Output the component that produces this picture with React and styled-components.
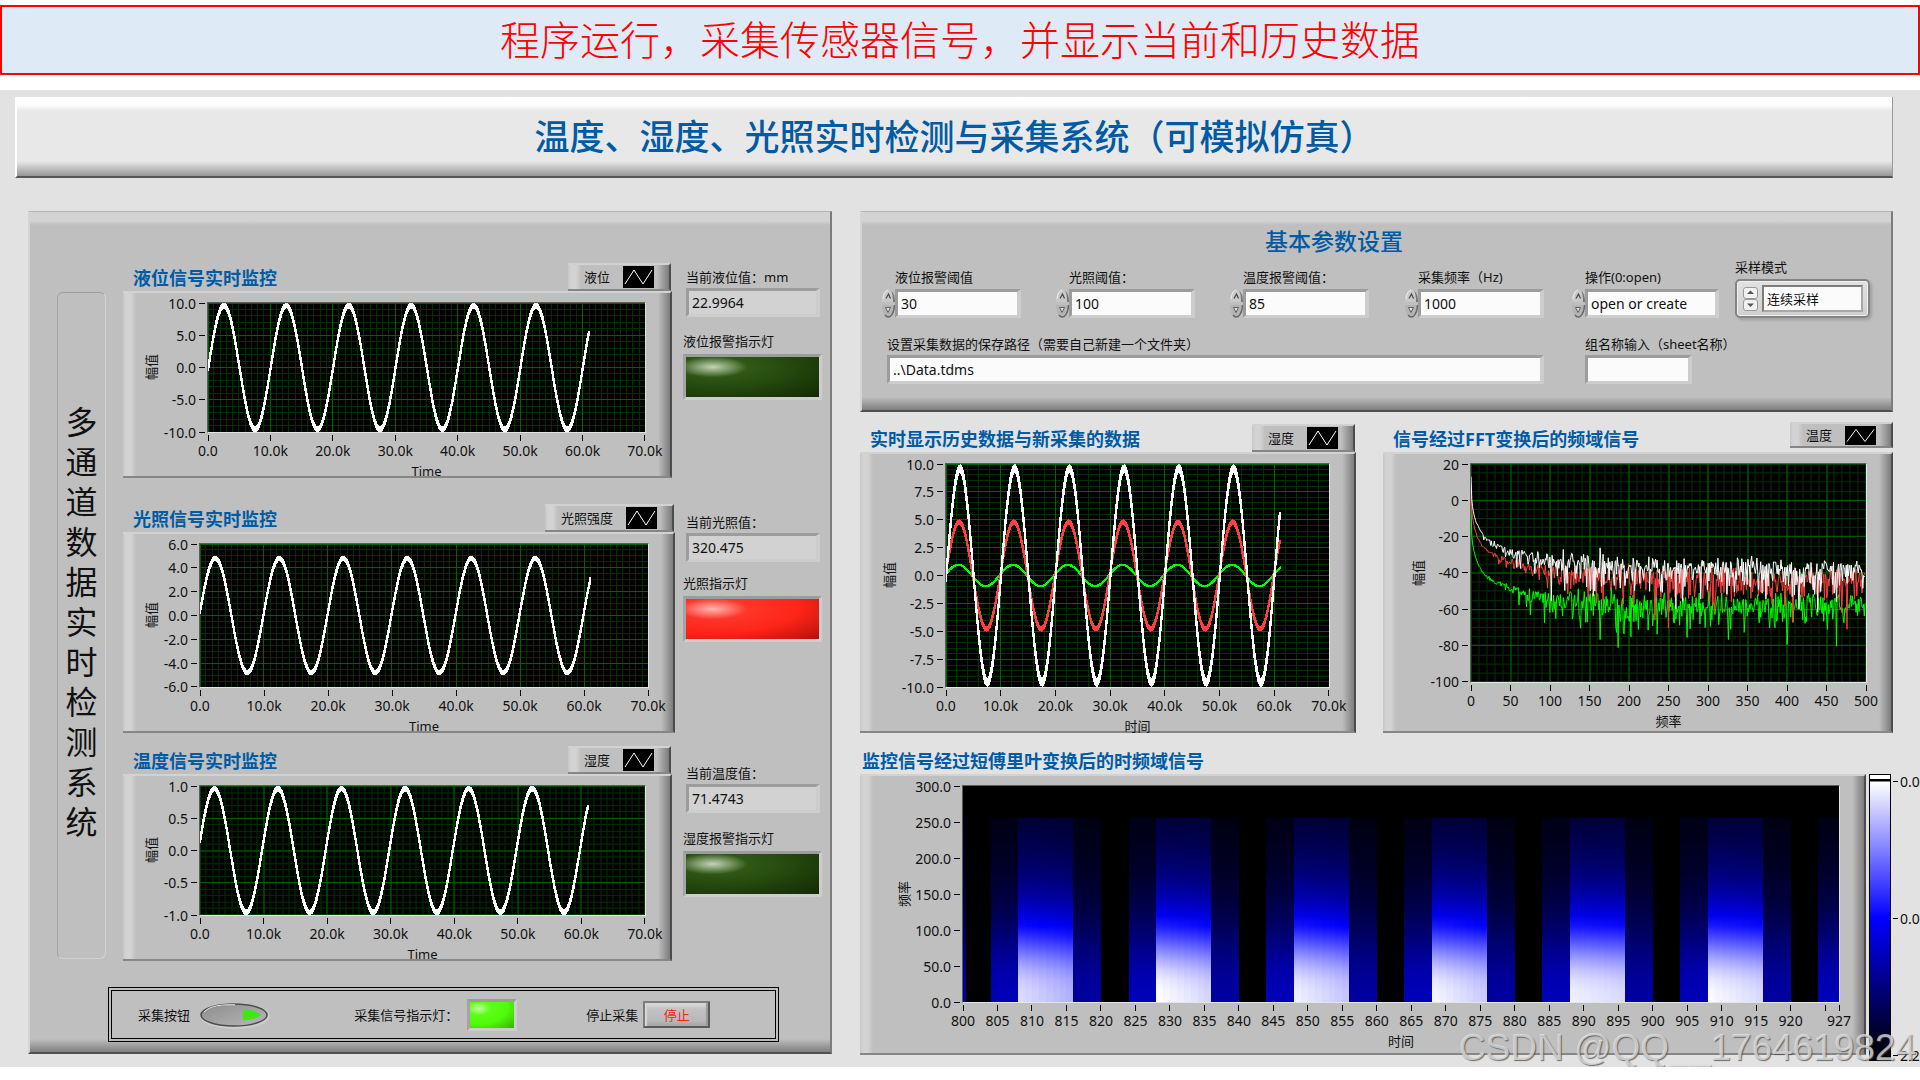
import { useId, useState } from "react";
import styled, { createGlobalStyle, css } from "styled-components";

const GlobalStyle = createGlobalStyle`
  *, *::before, *::after { box-sizing: border-box; }
  body {
    margin: 0;
    background: #fff;
    color: #111;
    font-family: "Noto Sans", "Noto Sans CJK SC", sans-serif;
    font-size: 13px;
    overflow-x: hidden;
  }
  input, select, button { font-family: inherit; margin: 0; }
`;

/* ---------- data ---------- */

const range = (from, to, step) => {
  const out = [];
  for (let i = 0; from + i * step <= to + step / 1000; i++) out.push(from + i * step);
  return out;
};

const timeLabels = ["0.0", "10.0k", "20.0k", "30.0k", "40.0k", "50.0k", "60.0k", "70.0k"];

const channels = [
  {
    title: "液位信号实时监控",
    legend: "液位",
    left: 84,
    plot: { width: 438, height: 131, max: 10, major: 5, minor: 1 },
    yLabels: ["10.0", "5.0", "0.0", "-5.0", "-10.0"],
    wave: { amp: 10, phase: -0.03 },
    narrow: true,
    gapAfter: 26,
    reading: { label: "当前液位值：mm", value: "22.9964", lamp: "液位报警指示灯", tone: "off", top: 4, gap: 14 },
  },
  {
    title: "光照信号实时监控",
    legend: "光照强度",
    left: 76,
    plot: { width: 449, height: 145, max: 6, major: 2, minor: 0.5 },
    yLabels: ["6.0", "4.0", "2.0", "0.0", "-2.0", "-4.0", "-6.0"],
    wave: { amp: 5, phase: 0.06 },
    gapAfter: 13,
    reading: { label: "当前光照值：", value: "320.475", lamp: "光照指示灯", tone: "red", top: 8, gap: 11 },
  },
  {
    title: "温度信号实时监控",
    legend: "湿度",
    left: 76,
    plot: { width: 445, height: 131, max: 1, major: 0.5, minor: 0.1 },
    yLabels: ["1.0", "0.5", "0.0", "-0.5", "-1.0"],
    wave: { amp: 1, phase: 0.15 },
    narrow: true,
    gapAfter: 0,
    reading: { label: "当前温度值：", value: "71.4743", lamp: "湿度报警指示灯", tone: "off", top: 17, gap: 15 },
  },
];

const lampTones = {
  off: ["#c3d2b8", "#37641a", "#22450c", "#0e2002"],
  red: ["#ffb4ae", "#ff4034", "#ff2418", "#980c08"],
  green: ["#c0ff9c", "#66ff20", "#50fc08", "#2c9a04"],
};

// 带噪声的正弦：峰值处较粗，过零处较细
function wavePath(amp, phase, max, w, h) {
  const toY = (v) => ((max - v) / (2 * max)) * h;
  const upper = [];
  const lower = [];
  const thick = amp * 0.03;
  for (let t = 0; t <= 61.2; t += 0.2) {
    const v = amp * 0.96 * Math.sin((2 * Math.PI * t) / 10 + phase);
    const x = ((t / 70) * w).toFixed(1);
    upper.push(`${x},${toY(v + thick).toFixed(1)}`);
    lower.unshift(`${x},${toY(v - thick).toFixed(1)}`);
  }
  return `M${upper.join("L")}L${lower.join("L")}Z`;
}

function makeRandom(seed) {
  let s = seed;
  return () => {
    s = (s * 1664525 + 1013904223) % 4294967296;
    return (s + 1) / 4294967297;
  };
}

function spectrumPoints(knots, seed, w, h) {
  const rnd = makeRandom(seed);
  const pts = [];
  for (let f = 0; f <= 499; f += 0.95) {
    let k = 1;
    while (k < knots.length - 1 && knots[k][0] < f) k++;
    const [x0, y0] = knots[k - 1];
    const [x1, y1] = knots[k];
    const t = Math.log((f + 1) / (x0 + 1)) / Math.log((x1 + 1) / (x0 + 1));
    const noise = 10 * Math.log10(-Math.log(rnd())) * 0.95 * Math.min(1, f / 140);
    const v = y0 + (y1 - y0) * t + Math.max(noise, -28);
    pts.push(`${((f / 500) * w).toFixed(1)},${(((20 - v) / 120) * h).toFixed(1)}`);
  }
  return pts.join(" ");
}

const spectra = [
  { color: "#00ff00", seed: 17, knots: [[0, -4], [1, -20], [5, -30], [10, -36], [20, -42], [50, -48], [100, -54], [200, -57], [500, -57]] },
  { color: "#ff4040", seed: 91, knots: [[0, 9], [1, -6], [5, -16], [10, -22], [20, -27], [50, -34], [100, -39], [200, -42], [500, -43]] },
  { color: "#ffffff", seed: 45, knots: [[0, 13], [1, 0], [5, -10], [10, -15], [20, -21], [50, -28], [100, -33], [200, -36], [500, -38]] },
];

const bursts = [
  [808, 0.93, 0.85],
  [828, 1, 0.92],
  [848, 0.97, 0.89],
  [868, 0.98, 0.9],
  [888, 0.97, 0.93],
  [908, 0.99, 0.93],
];

function heatColor(v) {
  if (v <= 0.5) return `rgb(0,0,${Math.round(v * 510)})`;
  const c = Math.round((v * 2 - 1) * 255);
  return `rgb(${c},${c},255)`;
}

const heatColumns = [
  { from: 800, width: 0.4, peak: 0.3 },
  ...bursts.flatMap(([start, a, b]) => [
    { from: start - 4, width: 4, peak: 0.36 },
    ...range(0, 7, 1).map((i) => ({ from: start + i, width: 1, peak: a + ((b - a) * i) / 7 })),
    { from: start + 8, width: 4, peak: 0.31 },
  ]),
  { from: 924, width: 3, peak: 0.36 },
];

/* ---------- styles ---------- */

const Banner = styled.header`
  display: flex;
  align-items: center;
  justify-content: center;
  height: 70px;
  margin: 5px 0 15px;
  border: 2px solid #fe0000;
  background: #deeaf6;
  color: #fe0000;
  font-size: 40px;
  font-weight: 300;
  line-height: 60px;
`;

const Frame = styled.main`
  position: relative;
  padding: 7px 0 6px;
  background: #e2e2e2;
`;

const TitlePanel = styled.h1`
  display: flex;
  align-items: center;
  justify-content: center;
  height: 81px;
  margin: 0 27px 33px 15px;
  border-left: 2px solid #fff;
  border-right: 1px solid #999;
  border-bottom: 2px solid #555;
  background: linear-gradient(#fff 0, #fdfdfd 8px, #e8e8e8 14px, #e8e8e8 64px, #c8c8c8 70px, #969696 100%);
  color: #005ba5;
  font-size: 35px;
  font-weight: 500;
  line-height: 40px;
`;

const Columns = styled.div`
  display: grid;
  grid-template-columns: minmax(0, 804fr) minmax(0, 1060fr);
  column-gap: 28px;
  align-items: start;
  padding-left: 28px;
`;

const raised = css`
  border-top: 1px solid #b2b2b2;
  border-left: 2px solid #d4d4d4;
  border-right: 2px solid #7c7c7c;
  border-bottom: 2px solid #505050;
  background:
    linear-gradient(#d3d3d3 0, #d2d2d2 9px, rgba(191, 191, 191, 0) 13px) top / 100% 13px no-repeat,
    linear-gradient(rgba(191, 191, 191, 0), #7e7e7e) bottom / 100% 13px no-repeat,
    #bfbfbf;
`;

const MonitorPanel = styled.section`
  ${raised}
  padding: 51px 8px 10px 27px;
`;

const MonitorBody = styled.div`
  display: grid;
  grid-template-columns: minmax(0, 66fr) minmax(0, 699fr);
`;

const SideTitle = styled.h2`
  display: flex;
  justify-content: center;
  margin: 29px 17px 2px 0;
  padding-top: 109px;
  border: 1px solid;
  border-color: #9c9c9c #d2d2d2 #d2d2d2 #a4a4a4;
  border-radius: 6px;
  font-size: 32px;
  font-weight: 400;
  line-height: 40px;

  span {
    width: 32px;
    word-break: break-all;
  }
`;

const ChannelRow = styled.div`
  display: grid;
  grid-template-columns: minmax(0, 552fr) minmax(0, 139fr);
  column-gap: 8px;
  margin-bottom: ${(p) => p.$gap}px;
`;

const Block = styled.section`
  flex: 1;
  min-width: 0;
  margin-right: ${(p) => (p.$narrow ? 3 : 0)}px;
`;

const BlockHeader = styled.div`
  display: flex;
  align-items: flex-end;
  justify-content: space-between;
  padding-left: ${(p) => p.$indent}px;
`;

const BlockTitle = styled.h3`
  margin: 0;
  color: #005ba5;
  font-size: 18px;
  font-weight: 700;
  line-height: 26px;
  white-space: nowrap;
`;

const bevel = css`
  border-top: 2px solid #d2d2d2;
  border-bottom: 2px solid #868686;
  border-right: 2px solid #4c4c4c;
  background:
    linear-gradient(90deg, #c6c6c6 0, #d3d3d3 3px, #d3d3d3 8px, rgba(191, 191, 191, 0) 13px) left / 13px 100% no-repeat,
    linear-gradient(90deg, rgba(191, 191, 191, 0), #7c7c7c) right / 12px 100% no-repeat,
    #bfbfbf;
`;

const LegendTab = styled.div`
  ${bevel}
  display: flex;
  align-items: center;
  gap: 13px;
  height: ${(p) => (p.$raised ? 26 : 28)}px;
  margin-right: ${(p) => (p.$raised ? 0 : 1)}px;
  margin-bottom: ${(p) => (p.$raised ? 4 : 0)}px;
  padding: 0 15px 0 16px;
  line-height: 20px;

  svg { display: block; background: #000; }
`;

const ChartPanel = styled.div`
  ${bevel}
  display: grid;
  grid-template-columns: ${(p) => p.$nameX + 10}px ${(p) => p.$left - p.$nameX - 10}px minmax(0, 1fr);
  padding: 9px 24px ${(p) => p.$bottom}px 0;
`;

const YName = styled.div`
  display: flex;
  align-items: center;
  justify-content: flex-end;

  span {
    width: 20px;
    line-height: 20px;
    writing-mode: vertical-rl;
    text-orientation: sideways;
    transform: rotate(180deg);
  }
`;

const YAxis = styled.div`
  display: flex;
  flex-direction: column;
  justify-content: space-between;
  padding: 1px 2px 1px 0;
  font-size: 14px;
`;

const YTick = styled.div`
  display: flex;
  align-items: center;
  justify-content: flex-end;
  gap: 3px;
  height: 0;
  white-space: nowrap;

  &::after {
    content: "";
    width: 6px;
    height: 1px;
    background: #000;
  }
`;

const PlotBox = styled.div`
  height: ${(p) => p.$height}px;
  border: 1px solid;
  border-color: #5c5c5c #e4e4e4 #e4e4e4 #5c5c5c;
  background: #000;

  svg { display: block; width: 100%; height: 100%; }
`;

const XAxis = styled.div`
  grid-column: 3;
  display: flex;
  height: 28px;
  padding: 2px 1px 0;
  font-size: 14px;
`;

const TickRun = styled.div`
  display: flex;
  flex: ${(p) => p.$span};
  justify-content: ${(p) => (p.$end ? "flex-end" : "space-between")};
`;

const XTick = styled.div`
  display: flex;
  flex-direction: column;
  align-items: center;
  width: 0;
  line-height: 20px;
  white-space: nowrap;

  &::before {
    content: "";
    flex: none;
    width: 1px;
    height: 6px;
    background: #000;
  }
`;

const XName = styled.div`
  grid-column: 3;
  height: 15px;
  line-height: 20px;
  text-align: center;
`;

const Reading = styled.div`
  display: flex;
  flex-direction: column;
  padding-top: ${(p) => p.$top}px;
`;

const Label = styled.label`
  display: block;
  height: ${(p) => p.$height || 21}px;
  margin-left: ${(p) => p.$indent || 0}px;
  line-height: 20px;
  white-space: nowrap;
`;

const sunken = css`
  border: solid;
  border-width: 3px 4px 3px 3px;
  border-color: #9c9c9c #cdcdcd #cdcdcd #9c9c9c;
`;

const TextBox = styled.input`
  ${sunken}
  width: 100%;
  min-width: 0;
  height: 29px;
  padding: 0 3px;
  border-radius: 0;
  background: ${(p) => (p.readOnly ? "#d2d2d2" : "#fbfbfb")};
  color: #111;
  font-size: 14px;
  outline: none;
`;

const ReadingBox = styled.div`
  display: flex;
  margin: 0 2px ${(p) => p.$gap}px 3px;
`;

const Lamp = styled.div`
  border: 3px solid;
  border-color: #9c9c9c #cdcdcd #cdcdcd #a4a4a4;
  width: ${(p) => (p.$small ? "50px" : "auto")};
  height: ${(p) => (p.$small ? 32 : 46)}px;
  background: ${({ $tone }) => {
    const [shine, top, mid, dark] = lampTones[$tone];
    return `
      radial-gradient(ellipse 26% 26% at 20% 25%, ${shine}, transparent),
      radial-gradient(ellipse 60% 60% at 25% 25%, ${top}, transparent),
      radial-gradient(ellipse 130% 130% at 20% 20%, ${mid} 50%, ${dark} 100%)`;
  }};
`;

const ControlBox = styled.div`
  display: grid;
  grid-template-columns: minmax(0, 218fr) minmax(0, 234fr) minmax(0, 160fr);
  align-items: center;
  height: 55px;
  margin: 26px 43px 0 51px;
  padding: 0 30px 0 26px;
  border: 4px double #000;

  > div { display: flex; align-items: center; }
`;

const RunButton = styled.button`
  display: flex;
  width: 72px;
  height: 30px;
  margin-left: 9px;
  padding: 0;
  border: 0;
  background: none;
`;

const LampName = styled.span`
  margin-right: 9px;
`;

const StopButton = styled.button`
  width: 67px;
  height: 27px;
  margin-left: 5px;
  padding: 0;
  border: 2px solid;
  border-color: #7d7d7d #5a5a5a #5a5a5a #7d7d7d;
  background: linear-gradient(#dedede, #c2c2c2 6px, #b8b8b8 18px, #a4a4a4);
  box-shadow: inset 2px 0 1px #d8d8d8, inset -2px 0 1px #999;
  color: #f5231c;
  font-size: 13px;
  line-height: 20px;
`;

const RightSide = styled.div`
  display: flex;
  flex-direction: column;
`;

const ParamPanel = styled.section`
  ${raised}
  height: 201px;
  margin-right: 27px;
  padding: 15px 21px 0 20px;
`;

const ParamTitle = styled.h2`
  margin: 0 0 2px;
  padding-right: 84px;
  color: #005ba5;
  font-size: 23px;
  font-weight: 500;
  line-height: 28px;
  text-align: center;
`;

const FieldRow = styled.div`
  display: grid;
  grid-template-columns: 174fr 174fr 175fr 167fr 163fr 135fr;
  align-items: end;
`;

const SaveRow = styled.div`
  display: grid;
  grid-template-columns: minmax(0, 690fr) minmax(0, 298fr);
  margin-top: 16px;
`;

const Field = styled.div`
  min-width: 0;
  padding-right: ${(p) => p.$pad || 0}px;
  padding-left: ${(p) => p.$lead || 0}px;
`;

const Spin = styled.div`
  display: flex;
  align-items: center;
  height: 30px;
`;

const Arrows = styled.span`
  display: flex;
  flex: none;
  flex-direction: column;
  gap: ${(p) => (p.$flat ? 0 : 1)}px;

  button {
    display: block;
    padding: 0;
    border: 0;
    background: none;
    line-height: 0;
  }

  svg { display: block; }
`;

const ModeBox = styled.div`
  display: flex;
  align-items: center;
  gap: 4px;
  height: 39px;
  padding: 0 5px 0 6px;
  border: 2px solid #848484;
  border-radius: 5px;
  background: linear-gradient(#e2e2e2, #cfcfcf);
  box-shadow: inset 0 0 0 1px #f0f0f0, 2px 2px 3px #a0a0a0;
`;

const ModeSelect = styled.select`
  flex: 1;
  min-width: 0;
  height: 27px;
  padding: 0 3px;
  appearance: none;
  border: 2px solid;
  border-color: #7c7c7c #a8a8a8 #a8a8a8 #7c7c7c;
  border-radius: 0;
  background: #fbfbfb;
  color: #111;
  font-size: 13px;
`;

const ChartPair = styled.div`
  display: grid;
  grid-template-columns: minmax(0, 496fr) minmax(0, 510fr);
  column-gap: 27px;
  align-items: end;
  margin: 10px 27px 15px 0;
`;

const HeatRow = styled.div`
  display: flex;
  align-items: flex-start;
`;

const Scale = styled.div`
  display: flex;
  flex: none;
  width: 54px;
  height: 287px;
  margin-top: 26px;
  padding-left: 3px;
`;

const ScaleBar = styled.div`
  width: 22px;
  border: 1px solid #000;
  border-bottom-width: 4px;
  background: linear-gradient(#fff 0, #fff 4px, #000 4px, #000 6px, #fff 7px, #00f 143px, #000 281px);
`;

const ScaleLabels = styled.div`
  display: flex;
  flex-direction: column;
  justify-content: space-between;
  padding: 7px 0 6px 2px;
  font-size: 14px;

  span {
    display: flex;
    align-items: center;
    gap: 2px;
    height: 0;
  }

  span::before {
    content: "";
    width: 5px;
    height: 1px;
    background: #000;
  }
`;

const Watermark = styled.div`
  position: absolute;
  right: 4px;
  bottom: 0;
  color: rgba(235, 235, 235, 0.72);
  font-family: "Liberation Sans", sans-serif;
  font-size: 37px;
  line-height: 38px;
  text-shadow: 1px 1px 1px rgba(70, 70, 70, 0.75);
  white-space: nowrap;
  pointer-events: none;
`;

/* ---------- parts ---------- */

function Legend({ name, raised: lifted }) {
  return (
    <LegendTab $raised={lifted}>
      {name}
      <svg width="31" height={lifted ? 19 : 22} viewBox="0 0 31 22" preserveAspectRatio="none">
        <path d="M2 18L11 4L20 18L29 4" fill="none" stroke="#fff" strokeWidth="1" />
      </svg>
    </LegendTab>
  );
}

function Grid({ width, height, cols, rows, colMinor, rowMinor }) {
  const draw = (nx, ny, color) => (
    <g stroke={color}>
      {range(0, nx, 1).map((i) => {
        const x = Math.round((i / nx) * width);
        return <line key={`x${i}`} x1={x} x2={x} y1="0" y2={height} />;
      })}
      {range(0, ny, 1).map((i) => {
        const y = Math.round((i / ny) * height);
        return <line key={`y${i}`} x1="0" x2={width} y1={y} y2={y} />;
      })}
    </g>
  );
  return (
    <g shapeRendering="crispEdges">
      {draw(cols * colMinor, rows * rowMinor, "#003200")}
      {draw(cols, rows, "#006400")}
    </g>
  );
}

function Chart({ title, legend, lifted, indent = 10, narrow, left, nameX = 28, bottom = 0, height, width, yName = "幅值", xName, yLabels, xRuns, children }) {
  return (
    <Block $narrow={narrow}>
      <BlockHeader $indent={indent}>
        <BlockTitle>{title}</BlockTitle>
        {legend && <Legend name={legend} raised={lifted} />}
      </BlockHeader>
      <ChartPanel $left={left} $nameX={nameX} $bottom={bottom}>
        <YName>
          <span>{yName}</span>
        </YName>
        <YAxis>
          {yLabels.map((t) => (
            <YTick key={t}>{t}</YTick>
          ))}
        </YAxis>
        <PlotBox $height={height}>
          <svg viewBox={`0 0 ${width} ${height}`} preserveAspectRatio="none">
            {children}
          </svg>
        </PlotBox>
        <XAxis>
          {xRuns.map((run, i) => (
            <TickRun key={i} $span={run.span} $end={run.end}>
              {run.labels.map((t, j) => (
                <XTick key={j}>{t}</XTick>
              ))}
            </TickRun>
          ))}
        </XAxis>
        <XName>{xName}</XName>
      </ChartPanel>
    </Block>
  );
}

function Wave({ amp, phase, max, width, height, color = "#fff" }) {
  return (
    <path
      d={wavePath(amp, phase, max, width, height)}
      fill={color}
      stroke={color}
      strokeWidth="1.8"
      shapeRendering="crispEdges"
    />
  );
}

function Channel({ data }) {
  const id = useId();
  const { plot, wave, reading } = data;
  return (
    <ChannelRow $gap={data.gapAfter}>
      <Chart
        title={data.title}
        legend={data.legend}
        narrow={data.narrow}
        left={data.left}
        width={plot.width}
        height={plot.height}
        xName="Time"
        yLabels={data.yLabels}
        xRuns={[{ span: 1, labels: timeLabels }]}
      >
        <Grid
          width={plot.width}
          height={plot.height}
          cols={7}
          colMinor={10}
          rows={(plot.max * 2) / plot.major}
          rowMinor={Math.round(plot.major / plot.minor)}
        />
        <Wave {...wave} max={plot.max} width={plot.width} height={plot.height} />
      </Chart>
      <Reading $top={reading.top}>
        <Label htmlFor={id} $indent={3}>
          {reading.label}
        </Label>
        <ReadingBox $gap={reading.gap}>
          <TextBox id={id} readOnly value={reading.value} />
        </ReadingBox>
        <Label as="span" $height={23}>
          {reading.lamp}
        </Label>
        <Lamp $tone={reading.tone} role="img" aria-label={reading.lamp} />
      </Reading>
    </ChannelRow>
  );
}

function SpinArrows() {
  return (
    <Arrows>
      <button type="button" aria-label="增加">
        <svg width="13" height="14" viewBox="0 0 13 14">
          <path d="M0 13C0 6 2.500 0.500 6.500 0.500S13 6 13 13Z" fill="#c9c9c9" />
          <path d="M9 1.500C12 4 13 8 13 13H11C11 8 10.500 4 9 1.500Z" fill="#777" />
          <path d="M1 10C1.500 5 3.500 1.500 6 1.200" fill="none" stroke="#f2f2f2" />
          <path d="M4 9.500L6.500 5L8.500 9.500" fill="none" stroke="#444" strokeWidth="1.200" />
        </svg>
      </button>
      <button type="button" aria-label="减少">
        <svg width="13" height="14" viewBox="0 0 13 14">
          <path d="M0 1C0 8 2.500 13.500 6.500 13.500S13 8 13 1Z" fill="#b4b4b4" />
          <path d="M3 11C5 13.800 8 13.800 10 10.500C11.800 7.500 12.500 4 12.500 1" fill="none" stroke="#666" strokeWidth="1.400" />
          <path d="M3.500 3.500H8.500L6 8.500Z" fill="#ddd" stroke="#555" strokeWidth="0.900" />
        </svg>
      </button>
    </Arrows>
  );
}

function SpinField({ label, value, pad }) {
  const id = useId();
  const [text, setText] = useState(value);
  return (
    <Field $pad={pad}>
      <Label htmlFor={id} $indent={13}>
        {label}
      </Label>
      <Spin>
        <SpinArrows />
        <TextBox id={id} value={text} onChange={(e) => setText(e.target.value)} />
      </Spin>
    </Field>
  );
}

function ModeField() {
  return (
    <Field>
      <Label htmlFor="mode" $height={22}>
        采样模式
      </Label>
      <ModeBox>
        <Arrows $flat>
          {["M4 7L7.500 3.500L11 7Z", "M4 4.500L7.500 8L11 4.500Z"].map((d) => (
            <button type="button" key={d} aria-label="切换模式">
              <svg width="15" height="12" viewBox="0 0 15 12">
                <rect x="0.500" y="0.500" width="14" height="11" rx="2.500" fill="#f1f1f1" stroke="#999" />
                <path d={d} fill="#555" />
              </svg>
            </button>
          ))}
        </Arrows>
        <ModeSelect id="mode" defaultValue="continuous">
          <option value="continuous">连续采样</option>
        </ModeSelect>
      </ModeBox>
    </Field>
  );
}

function Params() {
  return (
    <ParamPanel>
      <ParamTitle>基本参数设置</ParamTitle>
      <FieldRow>
        <SpinField label="液位报警阈值" value="30" pad={35} />
        <SpinField label="光照阈值：" value="100" pad={35} />
        <SpinField label="温度报警阈值：" value="85" pad={36} />
        <SpinField label="采集频率（Hz)" value="1000" pad={28} />
        <SpinField label="操作(0:open)" value="open or create" pad={16} />
        <ModeField />
      </FieldRow>
      <SaveRow>
        <Field $lead={5} $pad={28}>
          <Label htmlFor="path">设置采集数据的保存路径（需要自己新建一个文件夹）</Label>
          <TextBox id="path" defaultValue="..\Data.tdms" />
        </Field>
        <Field $lead={13} $pad={178}>
          <Label htmlFor="group">组名称输入（sheet名称）</Label>
          <TextBox id="group" defaultValue="" />
        </Field>
      </SaveRow>
    </ParamPanel>
  );
}

function Heatmap() {
  const width = 877;
  const height = 218;
  const top = height * (1 - 255 / 300);
  const xAt = (t) => ((t - 800) / 127) * width;
  const peaks = [...new Set(heatColumns.map((c) => c.peak))];
  return (
    <g shapeRendering="crispEdges">
      <defs>
        {peaks.map((p, i) => (
          <linearGradient key={p} id={`heat${i}`} x1="0" x2="0" y1="1" y2="0">
            {range(0, 255, 15).map((f) => (
              <stop key={f} offset={f / 255} stopColor={heatColor(p / (1 + Math.pow(f / 115, 2.5)))} />
            ))}
          </linearGradient>
        ))}
      </defs>
      {heatColumns.map((c) => (
        <rect
          key={c.from}
          x={xAt(c.from)}
          y={top}
          width={xAt(c.from + c.width) - xAt(c.from)}
          height={height - top}
          fill={`url(#heat${peaks.indexOf(c.peak)})`}
        />
      ))}
    </g>
  );
}

function Controls() {
  const [running, setRunning] = useState(true);
  return (
    <ControlBox>
      <div>
        <span id="run-label">采集按钮</span>
        <RunButton type="button" aria-labelledby="run-label" aria-pressed={running} onClick={() => setRunning(!running)}>
          <svg width="72" height="30" viewBox="0 0 72 30">
            <defs>
              <linearGradient id="knob" x1="0" x2="1" y1="0" y2="1">
                <stop offset="0" stopColor="#8c8c8c" />
                <stop offset="1" stopColor="#b8b8b8" />
              </linearGradient>
            </defs>
            <ellipse cx="36" cy="16" rx="35" ry="13" fill="#cdcdcd" />
            <ellipse cx="35" cy="15" rx="33" ry="11" fill="url(#knob)" stroke="#4c4c4c" strokeWidth="1.500" />
            <path d="M5 12C12 5 24 4.500 36 4.800" fill="none" stroke="#eee" />
            <path d="M44 9.500C52 9.500 58 11 62 15C58 18 52 20 44 20Z" fill={running ? "#3fe810" : "#1d4a0a"} />
          </svg>
        </RunButton>
      </div>
      <div>
        <LampName>采集信号指示灯：</LampName>
        <Lamp $tone={running ? "green" : "off"} $small role="img" aria-label="采集信号指示灯" />
      </div>
      <div>
        <span>停止采集</span>
        <StopButton type="button" onClick={() => setRunning(false)}>
          停止
        </StopButton>
      </div>
    </ControlBox>
  );
}

export default function App() {
  const everyFive = range(800, 925, 5).map((t) => (t === 925 ? "" : String(t)));
  return (
    <>
      <GlobalStyle />
      <Banner>程序运行，采集传感器信号，并显示当前和历史数据</Banner>
      <Frame>
        <TitlePanel>温度、湿度、光照实时检测与采集系统（可模拟仿真）</TitlePanel>
        <Columns>
          <MonitorPanel>
            <MonitorBody>
              <SideTitle>
                <span>多通道数据实时检测系统</span>
              </SideTitle>
              <div>
                {channels.map((c) => (
                  <Channel key={c.title} data={c} />
                ))}
              </div>
            </MonitorBody>
            <Controls />
          </MonitorPanel>

          <RightSide>
            <Params />
            <ChartPair>
              <Chart
                title="实时显示历史数据与新采集的数据"
                legend="湿度"
                left={85}
                nameX={29}
                width={384}
                height={225}
                xName="时间"
                yLabels={["10.0", "7.5", "5.0", "2.5", "0.0", "-2.5", "-5.0", "-7.5", "-10.0"]}
                xRuns={[{ span: 1, labels: timeLabels }]}
              >
                <Grid width={384} height={225} cols={7} colMinor={5} rows={8} rowMinor={5} />
                <Wave amp={1} phase={0.15} max={10} width={384} height={225} color="#00ff00" />
                <Wave amp={5} phase={0.06} max={10} width={384} height={225} color="#ff4040" />
                <Wave amp={10} phase={-0.03} max={10} width={384} height={225} />
              </Chart>
              <Chart
                title="信号经过FFT变换后的频域信号"
                legend="温度"
                lifted
                left={87}
                nameX={35}
                bottom={5}
                width={395}
                height={220}
                xName="频率"
                yLabels={["20", "0", "-20", "-40", "-60", "-80", "-100"]}
                xRuns={[{ span: 1, labels: range(0, 500, 50).map(String) }]}
              >
                <Grid width={395} height={220} cols={10} colMinor={5} rows={6} rowMinor={4} />
                {spectra.map((s) => (
                  <polyline
                    key={s.color}
                    points={spectrumPoints(s.knots, s.seed, 395, 220)}
                    fill="none"
                    stroke={s.color}
                    shapeRendering="crispEdges"
                  />
                ))}
              </Chart>
            </ChartPair>
            <HeatRow>
              <Chart
                title="监控信号经过短傅里叶变换后的时频域信号"
                indent={2}
                left={102}
                nameX={44}
                bottom={7}
                width={877}
                height={218}
                yName="频率"
                xName="时间"
                yLabels={["300.0", "250.0", "200.0", "150.0", "100.0", "50.0", "0.0"]}
                xRuns={[
                  { span: 125, labels: everyFive },
                  { span: 2, labels: ["927"], end: true },
                ]}
              >
                <Heatmap />
              </Chart>
              <Scale>
                <ScaleBar />
                <ScaleLabels>
                  <span>0.0</span>
                  <span>0.0</span>
                  <span>2.2</span>
                </ScaleLabels>
              </Scale>
            </HeatRow>
          </RightSide>
        </Columns>
        <Watermark>CSDN @QQ__1764619824</Watermark>
      </Frame>
    </>
  );
}
